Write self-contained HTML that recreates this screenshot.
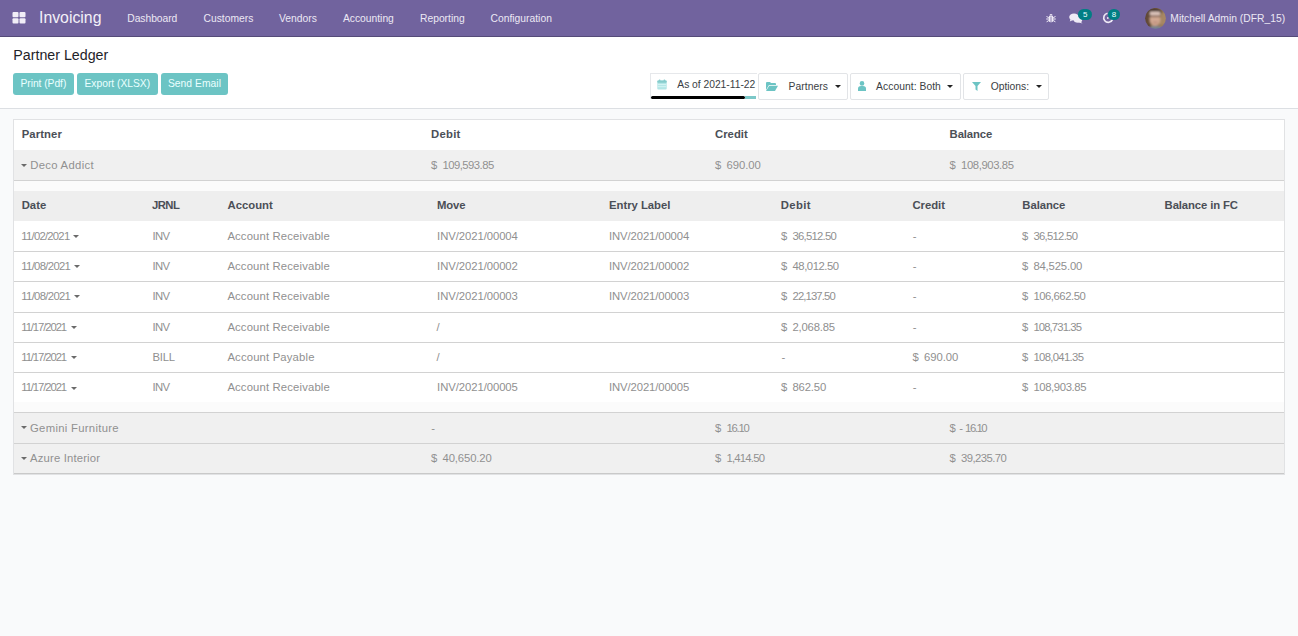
<!DOCTYPE html>
<html><head><meta charset="utf-8">
<style>
*{margin:0;padding:0;box-sizing:border-box}
html,body{width:1298px;height:636px;overflow:hidden;background:#f9fafb;font-family:"Liberation Sans",sans-serif}
.a{position:absolute;white-space:nowrap;line-height:1}
#nav{position:absolute;left:0;top:0;width:1298px;height:37px;background:#71639e;border-bottom:1px solid #554b78}
.nv{color:#ece8f4;font-size:10.3px}
.brand{color:#f3f0f8;font-size:15.84px}
#cp{position:absolute;left:0;top:37px;width:1298px;height:72px;background:#fff;border-bottom:1px solid #dcdfe3}
.ttl{font-size:14.24px;color:#1f2329}
.btn{position:absolute;top:73px;height:22px;background:#6cc4c4;border-radius:3px}
.bt{color:#eaffff;font-size:10.3px}
.fb{position:absolute;top:73px;height:27px;background:#fff;border:1px solid #e2e4e7;border-radius:2px}
.ft{color:#3a3e44;font-size:10.3px}
.caret{position:absolute;width:0;height:0;border-left:3px solid transparent;border-right:3px solid transparent;border-top:3.5px solid #222}
.tc{position:absolute;width:0;height:0;border-left:3px solid transparent;border-right:3px solid transparent;border-top:3.6px solid #6a6a6a}
#tbl{position:absolute;left:13px;top:119px;width:1272px;height:356px;background:#fff;border:1px solid #e1e2e4}
.row{position:absolute;left:14px;width:1270px}
.hline{position:absolute;left:14px;width:1270px;height:1px;background:#d2d2d2}
.h{color:#4b4f57;font-size:11.3px;font-weight:bold}
.t{color:#909090;font-size:11.3px}
</style></head><body>
<div id="nav"></div>
<svg class="a" style="left:12px;top:12px" width="14" height="12" viewBox="0 0 14 12">
<rect x="0.5" y="0" width="6" height="5.2" rx="1" fill="#f1eef7"/>
<rect x="7.5" y="0" width="6" height="5.2" rx="1" fill="#f1eef7"/>
<rect x="0.5" y="6.3" width="6" height="5.2" rx="1" fill="#f1eef7"/>
<rect x="7.5" y="6.3" width="6" height="5.2" rx="1" fill="#f1eef7"/>
</svg>
<svg class="a" style="left:1046px;top:13px" width="10" height="10" viewBox="0 0 10 10">
<path d="M3.2 2.2 Q5 0 6.8 2.2 Z" fill="#efeaf6"/>
<rect x="2.6" y="2.6" width="4.8" height="6.6" rx="2" fill="#efeaf6"/>
<path d="M0.5 3.5 L2.7 4.6 M9.5 3.5 L7.3 4.6 M0.2 6 L2.6 6 M9.8 6 L7.4 6 M0.6 8.8 L2.8 7.6 M9.4 8.8 L7.2 7.6" stroke="#efeaf6" stroke-width="1"/>
<path d="M5 3.6 V9" stroke="#71639e" stroke-width="0.8"/>
</svg>
<svg class="a" style="left:1069px;top:13px" width="14" height="11" viewBox="0 0 14 11">
<ellipse cx="5" cy="4" rx="4.8" ry="3.6" fill="#efeaf6"/>
<path d="M1.5 6 L0.8 8.5 L4 7 Z" fill="#efeaf6"/>
<ellipse cx="9" cy="7" rx="4.2" ry="2.8" fill="#efeaf6"/>
<path d="M11.5 8.5 L13.5 10.5 L10 9.5 Z" fill="#efeaf6"/>
</svg>
<div class="a" style="left:1078.4px;top:8.6px;width:13.8px;height:11.6px;border-radius:6px;background:#017e84;color:#e8ffff;font-size:8px;text-align:center;line-height:11.6px">5</div>
<svg class="a" style="left:1102px;top:12px" width="12" height="12" viewBox="0 0 12 12">
<path d="M5.5 1.2 A4.6 4.6 0 1 0 10.6 7.4" fill="none" stroke="#efeaf6" stroke-width="1.6"/>
<circle cx="5.8" cy="6" r="0.9" fill="#efeaf6"/>
</svg>
<div class="a" style="left:1108px;top:8.6px;width:12.2px;height:11.4px;border-radius:6px;background:#017e84;color:#e8ffff;font-size:8px;text-align:center;line-height:11.4px">8</div>
<svg class="a" style="left:1145px;top:8px" width="21" height="21" viewBox="0 0 21 21">
<defs><clipPath id="cc"><circle cx="10.5" cy="10.3" r="10.4"/></clipPath>
<filter id="bl"><feGaussianBlur stdDeviation="0.8"/></filter></defs>
<g clip-path="url(#cc)"><g filter="url(#bl)">
<rect x="-2" y="-2" width="25" height="25" fill="#9a7a58"/>
<rect x="-2" y="-2" width="8" height="25" fill="#5e4636"/>
<path d="M14 6 H22 M14 9 H22 M14 12 H22 M14 15 H22" stroke="#bfa078" stroke-width="1"/>
<path d="M2 6 H6 M2 10 H6 M2 14 H6" stroke="#7a5e46" stroke-width="1"/>
<path d="M3 5 Q5 -1 11 0 Q17 0 17 6 L15 5 Q11 2.5 6 4.5 Z" fill="#3a2c26"/>
<ellipse cx="10" cy="11" rx="5.3" ry="6.8" fill="#d2a892"/>
<rect x="5" y="3.5" width="10" height="3.5" fill="#dcc4bc"/>
<path d="M4.5 8.3 H15.5" stroke="#4a3a36" stroke-width="1.1"/>
<path d="M8 14 Q10 15.5 12.5 14" stroke="#a06860" stroke-width="0.8" fill="none"/>
<path d="M3 23 Q4 17.5 10.5 18 Q17 17.5 19 23Z" fill="#76848f"/>
</g></g>
</svg>
<div id="cp"></div>
<div class="btn" style="left:13px;width:61px"></div>
<div class="btn" style="left:77px;width:81px"></div>
<div class="btn" style="left:161px;width:67px"></div>
<div class="a" style="left:650px;top:73px;width:107px;height:26px;background:#fff;border-left:1px solid #e6e8eb;border-top:1px solid #e6e8eb"></div>
<svg class="a" style="left:657px;top:79px" width="10" height="11" viewBox="0 0 10 11">
<rect x="0.3" y="1.5" width="9.4" height="9" rx="1" fill="#b2e6e6"/>
<rect x="0.3" y="1.5" width="9.4" height="2.2" rx="0.8" fill="#86cccc"/>
<rect x="1.8" y="0.4" width="1.6" height="2" rx="0.6" fill="#86cccc"/><rect x="6.6" y="0.4" width="1.6" height="2" rx="0.6" fill="#86cccc"/>
<path d="M0.8 5.6 H9.2 M0.8 7.7 H9.2" stroke="#e6fafa" stroke-width="0.7"/>
</svg>
<div class="a" style="left:651px;top:96px;width:94px;height:3px;background:#000;border-radius:1.5px"></div>
<div class="a" style="left:745px;top:96px;width:11px;height:3px;background:#7cc8c8"></div>
<div class="fb" style="left:758px;width:90px"></div>
<svg class="a" style="left:766px;top:82px" width="12" height="9" viewBox="0 0 12 9">
<path d="M0 1 Q0 0 1 0 H4 L5 1 H9 Q10 1 10 2 V3 H3 L0 8 Z" fill="#6cc4c4"/>
<path d="M3.2 3.8 H12 L9 9 H0 Z" fill="#6cc4c4"/>
</svg>
<div class="caret" style="left:835px;top:84.5px"></div>
<div class="fb" style="left:850px;width:111px"></div>
<svg class="a" style="left:858px;top:81px" width="8" height="10" viewBox="0 0 8 10">
<circle cx="4" cy="2.4" r="2.3" fill="#6cc4c4"/>
<path d="M0 10 V7.5 Q0 5 3 5 H5 Q8 5 8 7.5 V10 Z" fill="#6cc4c4"/>
</svg>
<div class="caret" style="left:946.8px;top:84.5px"></div>
<div class="fb" style="left:963px;width:86px"></div>
<svg class="a" style="left:971.5px;top:82px" width="9" height="9" viewBox="0 0 9 9">
<path d="M0 0 H9 L5.5 4 V9 L3.5 7.5 V4 Z" fill="#6cc4c4"/>
</svg>
<div class="caret" style="left:1035.5px;top:84.5px"></div>
<div id="tbl"></div>
<div class="row" style="top:150px;height:30px;background:#f0f0f0"></div>
<div class="hline" style="top:180px"></div>
<div class="row" style="top:181px;height:10px;background:#fbfbfb"></div>
<div class="row" style="top:191px;height:30px;background:#eeeeee"></div>
<div class="hline" style="top:251px"></div>
<div class="hline" style="top:281px"></div>
<div class="hline" style="top:312px"></div>
<div class="hline" style="top:342px"></div>
<div class="hline" style="top:372px"></div>
<div class="row" style="top:402px;height:10px;background:#fbfbfb"></div>
<div class="hline" style="top:412px"></div>
<div class="row" style="top:413px;height:30px;background:#f0f0f0"></div>
<div class="hline" style="top:443px"></div>
<div class="row" style="top:444px;height:29px;background:#f0f0f0"></div>
<div class="hline" style="top:473px;background:#c9c9c9"></div>
<div class="a nv" style="left:127.30px;top:13.88px;letter-spacing:-0.05px">Dashboard</div>
<div class="a nv" style="left:203.60px;top:13.88px;letter-spacing:-0.01px">Customers</div>
<div class="a nv" style="left:279.00px;top:13.88px;letter-spacing:0.03px">Vendors</div>
<div class="a nv" style="left:342.90px;top:13.88px">Accounting</div>
<div class="a nv" style="left:420.00px;top:13.88px">Reporting</div>
<div class="a nv" style="left:490.50px;top:13.88px;letter-spacing:0.01px">Configuration</div>
<div class="a brand" style="left:39.00px;top:9.99px">Invoicing</div>
<div class="a nv" style="left:1170.30px;top:13.78px;letter-spacing:0.02px">Mitchell Admin (DFR_15)</div>
<div class="a ttl" style="left:13.30px;top:48.25px">Partner Ledger</div>
<div class="a bt" style="left:20.50px;top:78.58px;letter-spacing:-0.05px">Print (Pdf)</div>
<div class="a bt" style="left:84.50px;top:78.58px;letter-spacing:-0.02px">Export (XLSX)</div>
<div class="a bt" style="left:167.90px;top:78.58px;letter-spacing:0.05px">Send Email</div>
<div class="a ft" style="left:677.30px;top:79.88px;letter-spacing:-0.02px">As of 2021-11-22</div>
<div class="a ft" style="left:788.60px;top:82.18px;letter-spacing:0.04px">Partners</div>
<div class="a ft" style="left:876.10px;top:82.18px;letter-spacing:0.05px">Account: Both</div>
<div class="a ft" style="left:990.80px;top:82.18px;letter-spacing:-0.02px">Options:</div>
<div class="a h" style="left:21.70px;top:129.13px;letter-spacing:0.11px">Partner</div>
<div class="a h" style="left:431.10px;top:129.13px;letter-spacing:0.26px">Debit</div>
<div class="a h" style="left:715.00px;top:129.13px;letter-spacing:0.03px">Credit</div>
<div class="a h" style="left:949.60px;top:129.13px;letter-spacing:-0.11px">Balance</div>
<div class="tc" style="left:21.3px;top:163.8px"></div>
<div class="a t" style="left:30.20px;top:160.23px;letter-spacing:0.31px">Deco Addict</div>
<div class="a t" style="left:431.00px;top:160.23px">$</div>
<div class="a t" style="left:442.50px;top:160.23px;letter-spacing:-0.54px">109,593.85</div>
<div class="a t" style="left:715.00px;top:160.23px">$</div>
<div class="a t" style="left:726.50px;top:160.23px;letter-spacing:-0.07px">690.00</div>
<div class="a t" style="left:949.50px;top:160.23px">$</div>
<div class="a t" style="left:961.00px;top:160.23px;letter-spacing:-0.40px">108,903.85</div>
<div class="a h" style="left:21.70px;top:200.23px">Date</div>
<div class="a h" style="left:152.00px;top:200.23px;letter-spacing:-0.57px">JRNL</div>
<div class="a h" style="left:227.50px;top:200.23px;letter-spacing:0.02px">Account</div>
<div class="a h" style="left:436.90px;top:200.23px;letter-spacing:-0.09px">Move</div>
<div class="a h" style="left:609.00px;top:200.23px;letter-spacing:-0.02px">Entry Label</div>
<div class="a h" style="left:780.80px;top:200.23px;letter-spacing:0.34px">Debit</div>
<div class="a h" style="left:912.50px;top:200.23px;letter-spacing:-0.05px">Credit</div>
<div class="a h" style="left:1022.30px;top:200.23px;letter-spacing:-0.04px">Balance</div>
<div class="a h" style="left:1164.60px;top:200.23px;letter-spacing:-0.11px">Balance in FC</div>
<div class="a t" style="left:21.30px;top:230.73px;letter-spacing:-0.76px">11/02/2021</div>
<div class="tc" style="left:73.3px;top:234.8px"></div>
<div class="a t" style="left:152.40px;top:230.73px;letter-spacing:-0.62px">INV</div>
<div class="a t" style="left:227.40px;top:230.73px;letter-spacing:0.15px">Account Receivable</div>
<div class="a t" style="left:437.10px;top:230.73px;letter-spacing:-0.07px">INV/2021/00004</div>
<div class="a t" style="left:609.00px;top:230.73px;letter-spacing:-0.11px">INV/2021/00004</div>
<div class="a t" style="left:781.00px;top:230.73px">$</div>
<div class="a t" style="left:792.50px;top:230.73px;letter-spacing:-0.75px">36,512.50</div>
<div class="a t" style="left:912.70px;top:230.73px">-</div>
<div class="a t" style="left:1021.90px;top:230.73px">$</div>
<div class="a t" style="left:1033.40px;top:230.73px;letter-spacing:-0.71px">36,512.50</div>
<div class="a t" style="left:21.30px;top:260.93px;letter-spacing:-0.68px">11/08/2021</div>
<div class="tc" style="left:73.6px;top:265.0px"></div>
<div class="a t" style="left:152.40px;top:260.93px;letter-spacing:-0.62px">INV</div>
<div class="a t" style="left:227.40px;top:260.93px;letter-spacing:0.15px">Account Receivable</div>
<div class="a t" style="left:437.10px;top:260.93px;letter-spacing:-0.07px">INV/2021/00002</div>
<div class="a t" style="left:609.00px;top:260.93px;letter-spacing:-0.11px">INV/2021/00002</div>
<div class="a t" style="left:781.00px;top:260.93px">$</div>
<div class="a t" style="left:792.50px;top:260.93px;letter-spacing:-0.45px">48,012.50</div>
<div class="a t" style="left:912.70px;top:260.93px">-</div>
<div class="a t" style="left:1021.90px;top:260.93px">$</div>
<div class="a t" style="left:1033.40px;top:260.93px;letter-spacing:-0.17px">84,525.00</div>
<div class="a t" style="left:21.30px;top:291.13px;letter-spacing:-0.68px">11/08/2021</div>
<div class="tc" style="left:73.6px;top:295.2px"></div>
<div class="a t" style="left:152.40px;top:291.13px;letter-spacing:-0.62px">INV</div>
<div class="a t" style="left:227.40px;top:291.13px;letter-spacing:0.15px">Account Receivable</div>
<div class="a t" style="left:437.10px;top:291.13px;letter-spacing:-0.07px">INV/2021/00003</div>
<div class="a t" style="left:609.00px;top:291.13px;letter-spacing:-0.11px">INV/2021/00003</div>
<div class="a t" style="left:781.00px;top:291.13px">$</div>
<div class="a t" style="left:792.50px;top:291.13px;letter-spacing:-0.88px">22,137.50</div>
<div class="a t" style="left:912.70px;top:291.13px">-</div>
<div class="a t" style="left:1021.90px;top:291.13px">$</div>
<div class="a t" style="left:1033.40px;top:291.13px;letter-spacing:-0.46px">106,662.50</div>
<div class="a t" style="left:21.30px;top:321.83px;letter-spacing:-1.10px">11/17/2021</div>
<div class="tc" style="left:70.6px;top:325.9px"></div>
<div class="a t" style="left:152.40px;top:321.83px;letter-spacing:-0.62px">INV</div>
<div class="a t" style="left:227.40px;top:321.83px;letter-spacing:0.15px">Account Receivable</div>
<div class="a t" style="left:436.60px;top:321.83px">/</div>
<div class="a t" style="left:781.00px;top:321.83px">$</div>
<div class="a t" style="left:792.50px;top:321.83px;letter-spacing:-0.21px">2,068.85</div>
<div class="a t" style="left:912.70px;top:321.83px">-</div>
<div class="a t" style="left:1021.90px;top:321.83px">$</div>
<div class="a t" style="left:1033.40px;top:321.83px;letter-spacing:-0.88px">108,731.35</div>
<div class="a t" style="left:21.30px;top:352.03px;letter-spacing:-1.10px">11/17/2021</div>
<div class="tc" style="left:70.6px;top:356.1px"></div>
<div class="a t" style="left:152.40px;top:352.03px;letter-spacing:-0.21px">BILL</div>
<div class="a t" style="left:227.40px;top:352.03px;letter-spacing:0.16px">Account Payable</div>
<div class="a t" style="left:436.60px;top:352.03px">/</div>
<div class="a t" style="left:781.40px;top:352.03px">-</div>
<div class="a t" style="left:912.60px;top:352.03px">$</div>
<div class="a t" style="left:924.10px;top:352.03px;letter-spacing:-0.07px">690.00</div>
<div class="a t" style="left:1021.90px;top:352.03px">$</div>
<div class="a t" style="left:1033.40px;top:352.03px;letter-spacing:-0.66px">108,041.35</div>
<div class="a t" style="left:21.30px;top:382.43px;letter-spacing:-1.10px">11/17/2021</div>
<div class="tc" style="left:70.6px;top:386.5px"></div>
<div class="a t" style="left:152.40px;top:382.43px;letter-spacing:-0.62px">INV</div>
<div class="a t" style="left:227.40px;top:382.43px;letter-spacing:0.15px">Account Receivable</div>
<div class="a t" style="left:437.10px;top:382.43px;letter-spacing:-0.07px">INV/2021/00005</div>
<div class="a t" style="left:609.00px;top:382.43px;letter-spacing:-0.11px">INV/2021/00005</div>
<div class="a t" style="left:781.00px;top:382.43px">$</div>
<div class="a t" style="left:792.50px;top:382.43px;letter-spacing:-0.17px">862.50</div>
<div class="a t" style="left:912.70px;top:382.43px">-</div>
<div class="a t" style="left:1021.90px;top:382.43px">$</div>
<div class="a t" style="left:1033.40px;top:382.43px;letter-spacing:-0.38px">108,903.85</div>
<div class="tc" style="left:21.3px;top:426.4px"></div>
<div class="a t" style="left:30.00px;top:422.53px;letter-spacing:0.30px">Gemini Furniture</div>
<div class="a t" style="left:431.20px;top:422.53px">-</div>
<div class="a t" style="left:715.00px;top:422.53px">$</div>
<div class="a t" style="left:726.50px;top:422.53px;letter-spacing:-1.24px">16.10</div>
<div class="a t" style="left:949.50px;top:422.53px">$</div>
<div class="a t" style="left:959.20px;top:422.53px">-</div>
<div class="a t" style="left:965.10px;top:422.53px;letter-spacing:-1.44px">16.10</div>
<div class="tc" style="left:21.3px;top:456.5px"></div>
<div class="a t" style="left:30.00px;top:452.63px;letter-spacing:0.17px">Azure Interior</div>
<div class="a t" style="left:431.00px;top:452.63px">$</div>
<div class="a t" style="left:442.50px;top:452.63px;letter-spacing:-0.12px">40,650.20</div>
<div class="a t" style="left:715.00px;top:452.63px">$</div>
<div class="a t" style="left:726.50px;top:452.63px;letter-spacing:-0.78px">1,414.50</div>
<div class="a t" style="left:949.50px;top:452.63px">$</div>
<div class="a t" style="left:961.00px;top:452.63px;letter-spacing:-0.56px">39,235.70</div>
</body></html>
